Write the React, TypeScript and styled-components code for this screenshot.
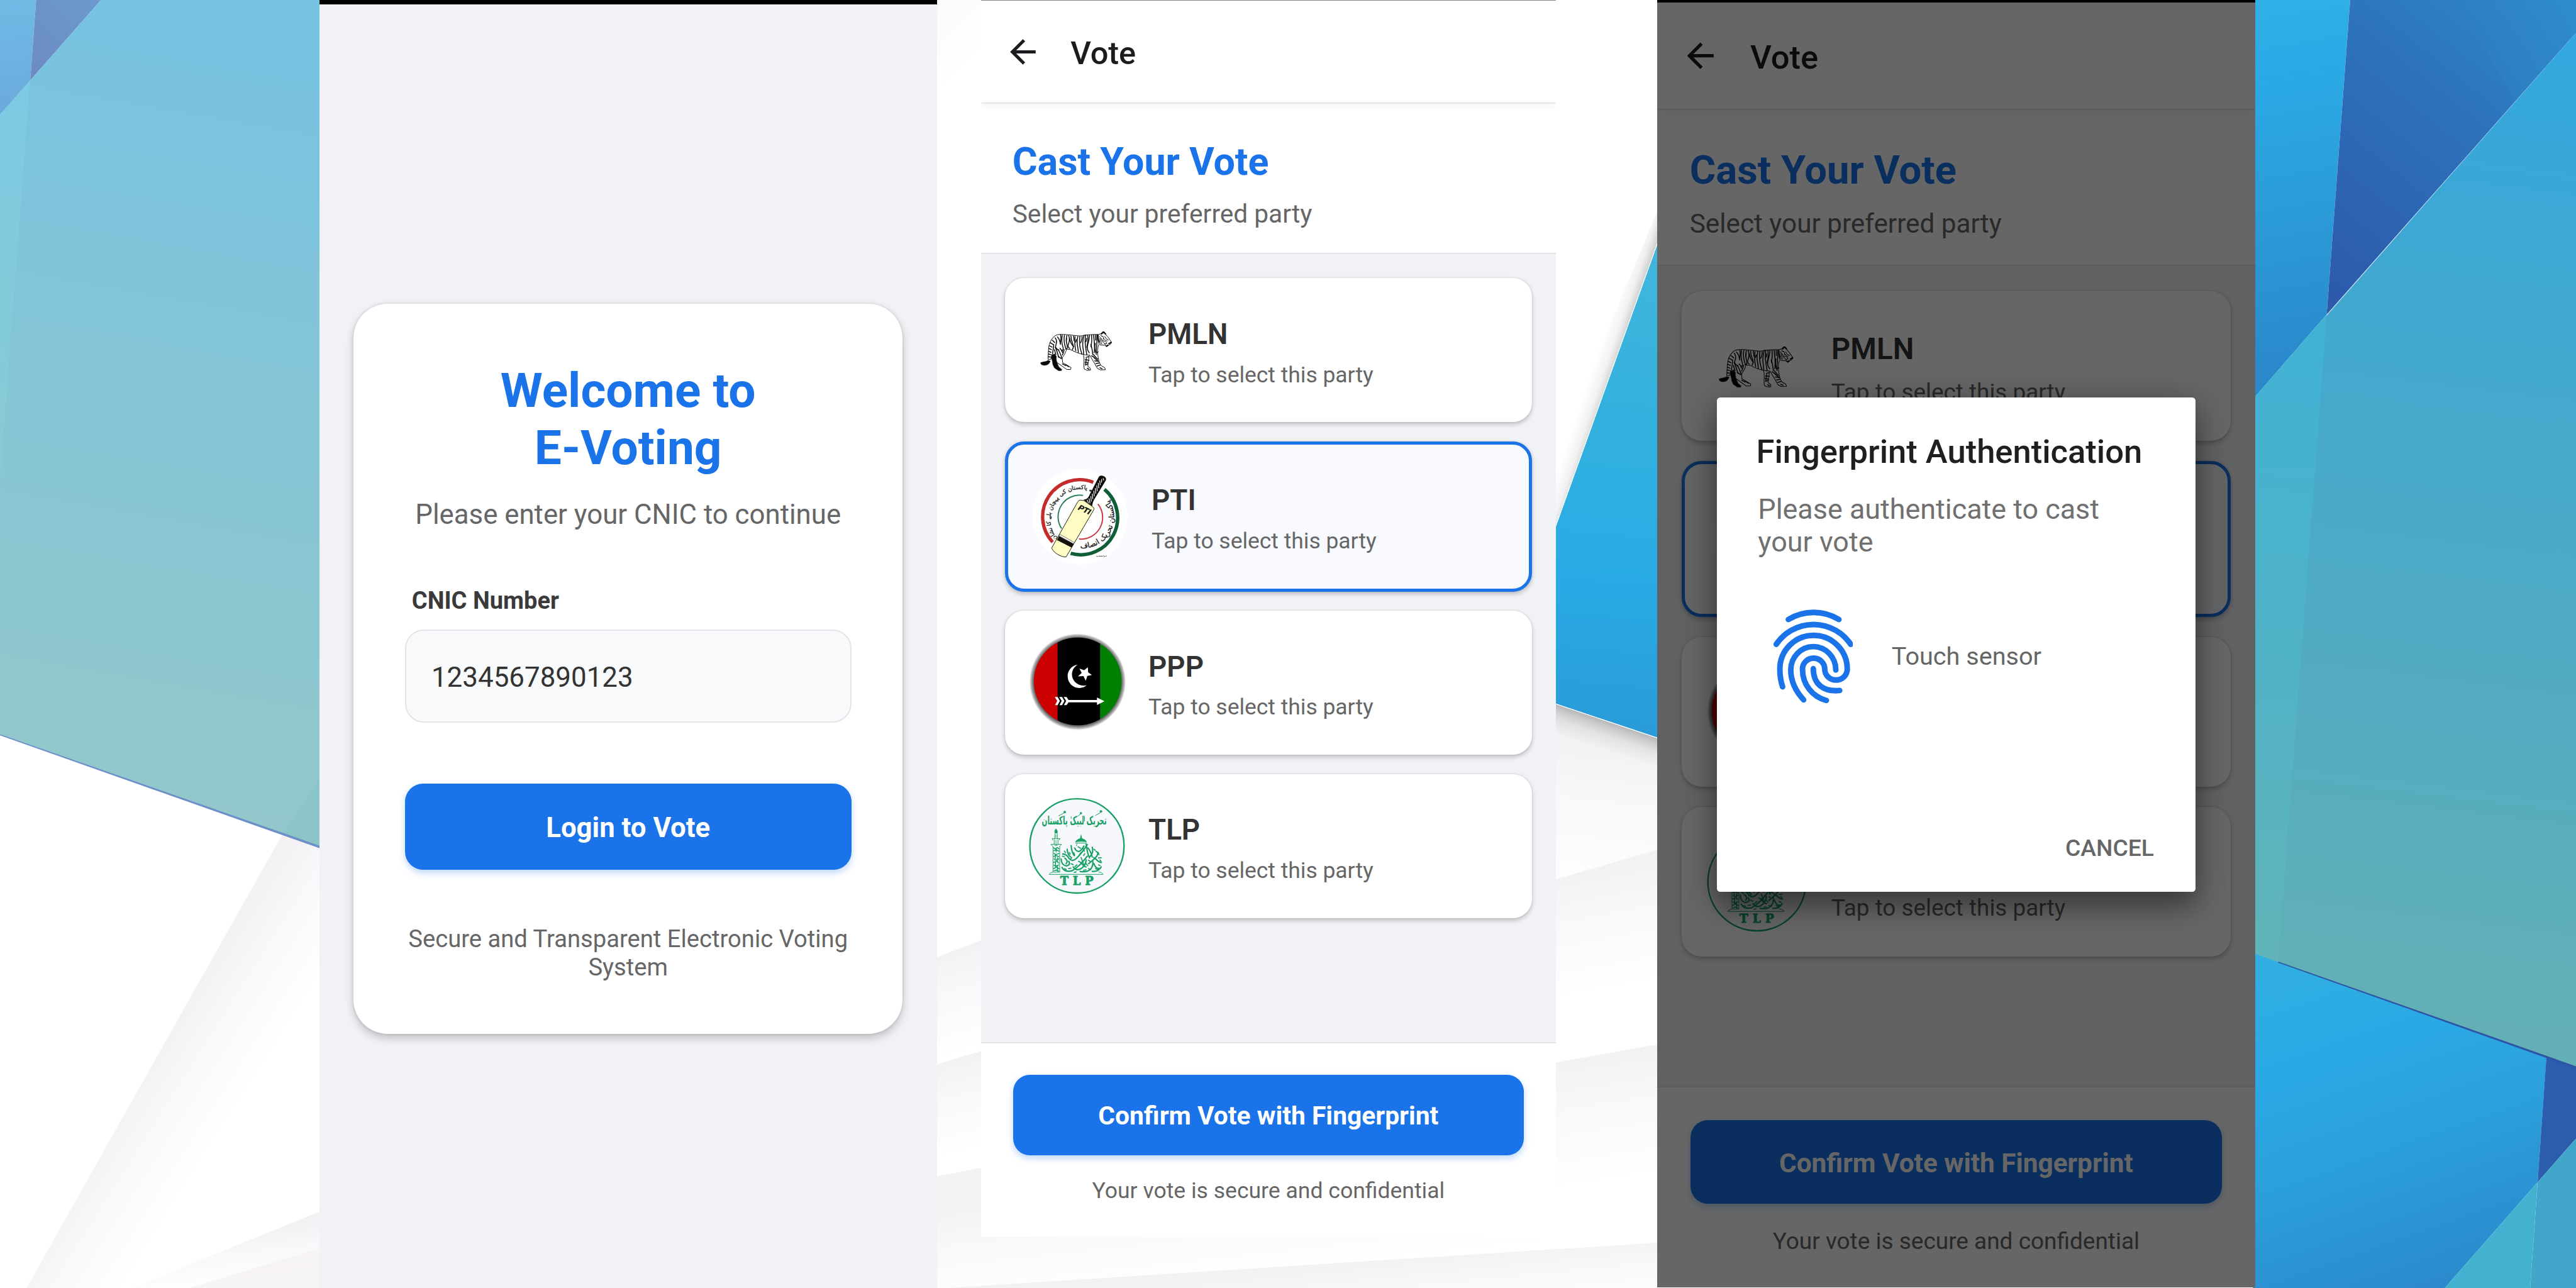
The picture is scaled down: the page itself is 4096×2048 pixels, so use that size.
import React from "react";
import styled, { createGlobalStyle, css } from "styled-components";

/* Every phone defines --dp (one density-independent pixel); its parts are sized in it. */
const dp = (n: number) => `calc(var(--dp) * ${n})`;

const blue = "#1a73e8";
const ink = "#333333";
const muted = "#666666";
const canvas = "#f0f2f5";
const hairline = "#e1e4e8";

const GlobalStyle = createGlobalStyle`
  html, body { margin: 0; padding: 0; background: #ffffff; }
  *, *::before, *::after { box-sizing: border-box; }
  h1, h2, p { margin: 0; }
  button, input { font: inherit; margin: 0; outline: none; }
`;

const Stage = styled.main`
  position: relative;
  width: 4096px;
  height: 2048px;
  overflow: hidden;
  display: grid;
  grid-template-columns: 982px 914px 951px;
  column-gap: 0;
  padding-left: 508px;
  font-family: Roboto, "Liberation Sans", sans-serif;
`;

const Backdrop = styled.svg`
  position: absolute;
  inset: 0;
  width: 100%;
  height: 100%;
`;

const Phone = styled.section<{ $dp: number; $height: number; $shift?: number; $bg?: string }>`
  --dp: ${(p) => p.$dp}px;
  position: relative;
  width: ${dp(360)};
  height: ${(p) => p.$height}px;
  margin-left: ${(p) => p.$shift ?? 0}px;
  background: ${(p) => p.$bg ?? "#ffffff"};
  display: flex;
  flex-direction: column;
  overflow: hidden;
`;

const StatusEdge = styled.div<{ $h: number; $color: string }>`
  flex: none;
  height: ${(p) => p.$h}px;
  background: ${(p) => p.$color};
`;

/* ---------- login ---------- */

const LoginCard = styled.div`
  margin: ${dp(174.5)} ${dp(20)} 0 ${dp(19.8)};
  width: ${dp(320.2)};
  height: ${dp(425.6)};
  padding: ${dp(34.2)} ${dp(30)} 0;
  border-radius: ${dp(20)};
  background: #ffffff;
  box-shadow: 0 ${dp(2.2)} ${dp(5)} rgba(0, 0, 0, 0.2), 0 0 ${dp(2)} rgba(0, 0, 0, 0.12);
  display: flex;
  flex-direction: column;
`;

const LoginTitle = styled.h1`
  color: ${blue};
  font-size: ${dp(28.1)};
  line-height: ${dp(33.2)};
  font-weight: 700;
  text-align: center;
`;

const LoginLead = styled.p`
  margin-top: ${dp(13)};
  color: ${muted};
  font-size: ${dp(16.05)};
  line-height: ${dp(19)};
  text-align: center;
  white-space: nowrap;
`;

const FieldLabel = styled.label`
  margin: ${dp(32.5)} 0 ${dp(8.5)} ${dp(4)};
  color: #3a3a3a;
  font-size: ${dp(13.95)};
  line-height: ${dp(16.4)};
  font-weight: 700;
`;

const Field = styled.input`
  height: ${dp(54.3)};
  padding: ${dp(0.9)} ${dp(14.7)} 0;
  border: ${dp(0.9)} solid #e1e4e8;
  border-radius: ${dp(11)};
  background: #f8f9fb;
  color: ${ink};
  font-size: ${dp(16.1)};
`;

const PrimaryButton = styled.button<{ $top?: number }>`
  flex: none;
  height: ${dp(50.2)};
  margin-top: ${(p) => dp(p.$top ?? 0)};
  padding: ${dp(1.1)} 0 0;
  border: 0;
  border-radius: ${dp(10.5)};
  background: ${blue};
  box-shadow: 0 ${dp(1.8)} ${dp(4)} rgba(26, 115, 232, 0.28);
  color: #ffffff;
  font-size: ${dp(16.05)};
  font-weight: 700;
`;

const LoginFoot = styled.p`
  margin: ${dp(32.1)} ${dp(-4)} 0;
  color: ${muted};
  font-size: ${dp(14)};
  line-height: ${dp(16.7)};
  text-align: center;
`;

/* ---------- vote ---------- */

const AppBar = styled.header`
  position: relative;
  flex: none;
  z-index: 1;
  height: ${dp(64)};
  padding-left: ${dp(14.1)};
  display: flex;
  align-items: center;
  gap: ${dp(17.9)};
  background: #ffffff;
  box-shadow: 0 ${dp(0.8)} ${dp(0.6)} rgba(0, 0, 0, 0.1), 0 ${dp(2)} ${dp(5)} rgba(0, 0, 0, 0.06);
`;

const BackIcon = styled.svg`
  width: ${dp(24)};
  height: ${dp(24)};
  fill: #1c1b1f;
`;

const AppBarTitle = styled.h2`
  padding-top: ${dp(2.3)};
  color: #1c1c1e;
  font-size: ${dp(19.9)};
  line-height: ${dp(24)};
  font-weight: 500;
`;

const Intro = styled.div`
  flex: none;
  height: ${dp(94.8)};
  padding: ${dp(23.2)} ${dp(20)} 0 ${dp(19.6)};
  border-bottom: ${dp(0.8)} solid ${hairline};
  display: flex;
  flex-direction: column;
  gap: ${dp(8.7)};
  background: #ffffff;
`;

const IntroTitle = styled.h1`
  color: ${blue};
  font-size: ${dp(24)};
  line-height: ${dp(28)};
  font-weight: 700;
`;

const IntroText = styled.p`
  color: ${muted};
  font-size: ${dp(16)};
  line-height: ${dp(19)};
`;

const PartyList = styled.div`
  flex: none;
  height: ${dp(493.3)};
  padding: ${dp(15)} ${dp(14.8)};
  display: flex;
  flex-direction: column;
  gap: ${dp(12)};
  background: ${canvas};
`;

const PartyCard = styled.article<{ $selected?: boolean }>`
  flex: none;
  padding: ${dp(15.1)} ${dp(15)};
  border-radius: ${dp(12)};
  display: flex;
  gap: ${dp(15)};
  background: #ffffff;
  box-shadow: 0 ${dp(1.4)} ${dp(3)} rgba(0, 0, 0, 0.2), 0 0 ${dp(1.4)} rgba(0, 0, 0, 0.1);
  ${(p) =>
    p.$selected &&
    css`
      border: ${dp(2)} solid ${blue};
      background: #f8faff;
    `}
`;

const Logo = styled.svg`
  flex: none;
  width: ${dp(60)};
  height: ${dp(60)};
  overflow: visible;
`;

const PartyText = styled.div`
  padding-top: ${dp(9.5)};
  display: flex;
  flex-direction: column;
  gap: ${dp(6.9)};
`;

const PartyName = styled.h2`
  color: ${ink};
  font-size: ${dp(18)};
  line-height: ${dp(21)};
  font-weight: 600;
`;

const PartyHint = styled.p`
  color: ${muted};
  font-size: ${dp(13.95)};
  line-height: ${dp(16.4)};
`;

const ConfirmBar = styled.footer`
  flex: 1;
  padding: ${dp(20)} ${dp(20)} 0 ${dp(19.9)};
  border-top: ${dp(0.9)} solid ${hairline};
  display: flex;
  flex-direction: column;
  background: #ffffff;
`;

const ConfirmNote = styled.p`
  margin-top: ${dp(14.3)};
  color: ${muted};
  font-size: ${dp(14)};
  line-height: ${dp(16.4)};
  text-align: center;
`;

/* ---------- fingerprint dialog ---------- */

const Scrim = styled.div`
  position: absolute;
  inset: 0;
  z-index: 2;
  display: flex;
  align-items: center;
  justify-content: center;
  background: rgba(0, 0, 0, 0.6);
`;

const Dialog = styled.div`
  width: ${dp(288)};
  height: ${dp(297.4)};
  margin-top: ${dp(1)};
  padding: ${dp(20.8)} ${dp(25)} ${dp(18)} ${dp(24.7)};
  border-radius: ${dp(2)};
  background: #ffffff;
  box-shadow: 0 ${dp(9)} ${dp(16)} rgba(0, 0, 0, 0.34), 0 ${dp(2)} ${dp(20)} rgba(0, 0, 0, 0.2);
  display: flex;
  flex-direction: column;
`;

const DialogTitle = styled.h2`
  margin-left: ${dp(-1.1)};
  color: #1f1f1f;
  font-size: ${dp(19.9)};
  line-height: ${dp(24)};
  font-weight: 500;
  white-space: nowrap;
`;

const DialogText = styled.p`
  width: ${dp(220)};
  margin-top: ${dp(12.6)};
  color: #707070;
  font-size: ${dp(17)};
  line-height: ${dp(20)};
`;

const SensorRow = styled.div`
  margin: ${dp(30.1)} 0 0 ${dp(9.3)};
  display: flex;
  align-items: center;
  gap: ${dp(23.2)};
  color: ${muted};
  font-size: ${dp(15)};
  line-height: ${dp(18)};
`;

const FingerIcon = styled.svg`
  width: ${dp(47.9)};
  height: ${dp(56.5)};
  fill: none;
  stroke: ${blue};
  stroke-width: 45;
  stroke-linecap: round;
`;

const CancelButton = styled.button`
  align-self: flex-end;
  margin-top: auto;
  padding: 0;
  border: 0;
  background: transparent;
  color: ${muted};
  font-size: ${dp(14.1)};
  line-height: ${dp(16.4)};
  font-weight: 500;
`;

/* ---------- drawings ---------- */

const tigerStripes = [
  "M452 556Q470 580 458 610T482 654", "M470 548Q490 570 494 608", "M495 532Q502 560 492 600", "M508 534Q500 590 512 622T504 662",
  "M526 534Q518 580 532 624L538 646", "M546 536Q536 570 546 606T538 646", "M560 536Q572 570 560 600T568 640", "M578 540Q580 574 592 600T590 650",
  "M568 560Q574 600 600 626", "M600 540L604 580", "M612 545Q604 600 618 660", "M634 544Q622 590 634 634L638 672",
  "M650 545Q644 610 656 650T664 684", "M668 545Q670 566 656 596", "M684 534Q668 590 676 640T676 688", "M696 532Q688 590 700 652L706 690",
  "M712 534Q720 574 706 632", "M728 532Q726 570 714 608T726 676", "M744 532Q750 580 740 628", "M738 610Q750 640 754 690",
  "M760 532Q768 590 768 632T764 676", "M776 532L778 574", "M788 532Q790 580 784 636T796 668", "M774 600Q764 650 784 690",
  "M428 575l20 18", "M412 595l24 14", "M406 620l20 10", "M402 642l20 8", "M400 664l18 8", "M398 686l18 4", "M396 708l18 2",
  "M440 610Q438 640 430 684", "M452 630Q466 660 480 712", "M474 650Q490 670 506 720", "M490 640Q502 650 512 674", "M524 650Q520 670 510 694",
  "M446 650Q450 670 458 690", "M700 712l24-6", "M694 732l30 4", "M692 752l24 4", "M695 774l20-8", "M702 722l-6 50", "M745 700Q760 706 776 724",
  "M760 690Q770 704 794 728", "M770 740l28 4", "M780 762l26-4", "M790 782l24-8", "M765 715l34 30", "M500 722l-24-18",
  "M510 765l26 14", "M536 770l24 18", "M710 800l14 8", "M812 796l18 8", "M544 560l-4 20", "M622 570l-6 20", "M704 560l-4 26",
];

const Tiger = () => (
  <Logo viewBox="240 271 771 771" fill="none" stroke="#0b0b0b" strokeLinecap="round" strokeLinejoin="round">
    <path
      strokeWidth="5"
      d="M440 548C455 530 480 526 520 528C580 531 620 540 660 540C700 532 740 528 800 528L822 522C826 506 842 502 852 514L860 532C876 546 886 562 895 576L906 592L897 606L885 612L868 626L850 615L812 612C802 606 797 590 796 560M801 612C792 640 790 665 796 700C800 740 812 770 826 782L850 795L856 812L815 813L790 800C775 770 752 735 730 695C690 694 640 685 575 650L545 645C532 682 520 702 508 715L512 755L580 795L575 810L545 810L468 755M440 548C412 575 400 610 398 650L394 728L418 728L424 690M680 695C690 730 678 770 685 805Q705 823 735 815L735 800L715 785C712 755 722 730 725 700"
    />
    <g strokeWidth="7.5">
      {tigerStripes.map((d) => (
        <path key={d} d={d} />
      ))}
    </g>
    <path strokeWidth="10" d="M824 524L842 508L856 524M884 602L902 592M864 622L876 614M796 534Q796 560 804 586" />
    <path strokeWidth="5" d="M808 545Q826 560 812 580T826 602M826 540Q850 546 838 568M850 545Q858 566 880 574M836 578Q862 582 868 600L850 604M822 560Q828 584 858 612M840 560Q852 576 870 582M818 536l16 10" />
    <path strokeWidth="16" stroke="#777" opacity=".7" d="M814 562l8 30" />
    <path
      fill="#0b0b0b"
      strokeWidth="2"
      d="M335 756C350 746 378 750 394 736L412 742C407 762 390 777 365 777C345 777 333 768 335 756ZM424 694L448 684L462 706C456 732 470 762 482 790L506 810L500 820L478 820L445 797L432 770C432 745 418 722 424 694Z"
    />
  </Logo>
);

const Bat = () => (
  <Logo viewBox="267 172 771 771" fill="none">
    <defs>
      <path id="pti-upper" d="M464 728A244 244 0 0 1 752 356" />
      <path id="pti-lower" d="M600 800A250 250 0 0 0 868 400" />
    </defs>
    <circle cx="652" cy="558" r="384" fill="#ffffff" />
    <path stroke="#c62b2b" strokeWidth="27" d="M433 764A298 298 0 0 1 760 283" />
    <path stroke="#0f5f36" strokeWidth="28" d="M850 340A298 298 0 0 1 578 855" />
    <path stroke="#2d8259" strokeWidth="10" d="M505 655A174 174 0 0 1 678 388" />
    <path stroke="#c93a3f" strokeWidth="10" d="M797 457A174 174 0 0 1 645 739" />
    <g fill="#151515" stroke="#151515" strokeWidth="1.4" fontFamily="'DejaVu Sans', sans-serif" textAnchor="middle">
      <text fontSize="47">
        <textPath href="#pti-upper" startOffset="51%">نئے پاکستان کی پہچان بلے کا نشان</textPath>
      </text>
      <text fontSize="60">
        <textPath href="#pti-lower" startOffset="52%">پاکستان تحریک انصاف</textPath>
      </text>
    </g>
    <path fill="#0f0c0a" d="M680 424C716 420 722 400 732 380L806 236Q822 222 846 234Q866 246 862 266L768 420C758 440 752 452 752 474Z" />
    <path
      stroke="#ffffff"
      strokeWidth="6"
      d="M828 256l-2 30M812 268l4 38M800 288l4 42M788 308l4 46M776 330l4 44M764 352l4 44M752 374l4 44M740 394l4 44M726 412l8 40M710 424l12 24M840 250l4 18"
    />
    <path
      fill="#fffdc4"
      stroke="#1c1a12"
      strokeWidth="5"
      strokeLinejoin="round"
      d="M652 426Q640 428 632 445L425 812C440 850 500 886 541 884L766 500Q770 488 752 478L684 430Z"
    />
    <path fill="#ffffff" stroke="#1c1a12" strokeWidth="3" d="M492 702L608 768L602 780L485 714Z" />
    <path fill="#15110c" d="M484 716L602 778L586 808L468 748Z" />
    <text
      fill="#0c0c0c"
      stroke="#0c0c0c"
      strokeWidth="2"
      fontFamily="'Liberation Sans', sans-serif"
      fontWeight="700"
      fontStyle="italic"
      fontSize="62"
      transform="translate(634 500) rotate(25)"
      textLength="102"
      lengthAdjust="spacingAndGlyphs"
    >
      PTI
    </text>
    <path stroke="#444" strokeWidth="5" d="M785 879h12M802 877h34M842 872l6 12M852 878h6M862 876h6" />
  </Logo>
);

const Flag = () => (
  <Logo viewBox="180 130 771 771">
    <defs>
      <clipPath id="ppp-disc">
        <circle cx="573" cy="507" r="353" />
      </clipPath>
      <radialGradient id="ppp-rim" gradientUnits="userSpaceOnUse" cx="572" cy="510" r="392">
        <stop offset=".89" stopColor="#555" />
        <stop offset=".93" stopColor="#8d8d8d" />
        <stop offset=".965" stopColor="#b5b5b5" stopOpacity=".8" />
        <stop offset="1" stopColor="#ffffff" stopOpacity="0" />
      </radialGradient>
    </defs>
    <circle cx="572" cy="510" r="392" fill="url(#ppp-rim)" />
    <g clipPath="url(#ppp-disc)">
      <rect x="180" y="130" width="232" height="771" fill="#cc0000" />
      <rect x="411" y="130" width="344" height="771" fill="#000000" />
      <rect x="754" y="130" width="200" height="771" fill="#008000" />
    </g>
    <g fill="#ffffff">
      <path d="M572 373C520 380 490 425 492 468C494 525 540 562 590 560C615 558 635 550 645 538C600 548 562 530 540 497C515 455 525 400 572 373Z" />
      <path d="M654 393L657 434L687 455L650 463L638 502L619 464L575 467L605 439L587 403L625 417Z" />
      <path d="M388 632h23l19 32-19 34h-21l18-34ZM424 632h23l19 32-19 34h-21l18-34ZM460 632h23l16 24h229v-20l60 30-60 31v-22H499l-16 23h-21l18-34Z" />
    </g>
  </Logo>
);

const Mosque = () => (
  <Logo viewBox="180 122 771 771" fill="none" stroke="#18a065" strokeLinecap="round" strokeLinejoin="round">
    <circle cx="567" cy="507" r="379" fill="#f7f8fb" strokeWidth="12" />
    <g fill="#18a065" stroke="none">
      <text
        transform="translate(545 334) scale(.62 1.12)"
        fontFamily="'DejaVu Sans', sans-serif"
        fontSize="84"
        fontWeight="700"
        textAnchor="middle"
      >
        تحریک لبیک پاکستان
      </text>
      <circle cx="468" cy="234" r="10" />
      <circle cx="599" cy="243" r="9" />
      <circle cx="760" cy="229" r="10" />
      <path d="M552 478Q560 455 592 446L600 410L608 446Q640 455 646 478Q600 466 552 478ZM398 366L408 382Q416 398 408 406H390Q382 396 388 382Z" />
      <path d="M384 506Q398 490 414 506Z" />
      <text
        x="583"
        y="823"
        stroke="#18a065"
        strokeWidth="4"
        fontFamily="'DejaVu Serif', 'Liberation Serif', serif"
        fontSize="91"
        fontWeight="700"
        textAnchor="middle"
        letterSpacing="34"
      >
        TLP
      </text>
    </g>
    <g strokeWidth="5">
      <path d="M420 264L468 240M562 276L599 248M716 262L760 236M520 270v16M628 268v40" />
      <path d="M390 408L388 446M408 408L410 446M370 448H430M384 456V492M414 456V492M358 494H442M368 450l6 10M430 450l-6 10M360 498l12 12M440 498l-12 12" />
      <path d="M374 512V716M428 512V716M344 736H776M344 734Q356 716 376 718H428M742 718Q766 716 776 734M556 484H644M566 492L562 506M636 492L642 506" />
      <path d="M398 420v20M398 462v26" strokeWidth="7" opacity=".6" />
    </g>
    <g strokeWidth="8">
      <path d="M380 522l14 10 14-12 14 10M380 546l20-8 22 12M382 566l14 12 26-10M380 592l18-8 24 10M384 612l12 10 26-12M380 640l22-10 18 14M382 662l16 8 22-10M380 690l20-12 22 12M382 708l18-6 20 8M400 524v30M392 580v28M410 600v34M394 640v34M410 670v40" />
    </g>
    <g strokeWidth="11">
      <path d="M452 572Q480 570 505 610Q530 640 565 605Q610 560 650 496M488 534Q492 580 516 596M520 504Q524 560 546 586M548 524Q560 552 584 552Q608 540 622 508M642 494Q648 560 668 604M656 524Q676 548 690 596M690 518Q704 560 672 592M722 552Q746 560 726 590Q700 620 660 650" />
      <path d="M440 612Q440 660 480 668Q520 660 500 630M446 680Q470 724 530 706Q590 670 650 590M536 676Q560 712 600 690Q640 660 640 620M592 712Q650 724 680 690Q700 660 694 630M690 712Q740 716 762 676M716 610Q744 640 764 640M470 606Q500 628 480 650M704 650Q716 690 744 688M600 640Q616 670 640 676" />
    </g>
    <g strokeWidth="9">
      <path d="M600 600l22 60M580 630l14 8M640 650l14 16M466 690l14 6M716 690l22 8M740 604l22-2M466 548l8 14M506 560l6 14M576 514l20 12M704 534l10 8M660 690l18 8M524 600l-8 14M620 530l6 20M740 660l14 6M560 716l-14 4M480 706l16 4M450 590l16 4M540 560l8 18M600 560l-14 18M630 570l-10 14M676 560l8 10M700 600l14 12M660 622l16 12M566 660l-16 14M520 650l16 8M500 690l18-4M620 704l20-4M752 620l8 10M738 560l6 18" />
    </g>
  </Logo>
);

const Fingerprint = () => (
  <FingerIcon viewBox="85 105 640 755">
    <path d="M204 186A390 390 0 0 1 611 186" />
    <path d="M107 386A361 361 0 0 1 706 386" />
    <path d="M158 727C142 680 136 635 136 585A271 271 0 0 1 678 585A90.5 88 0 0 1 497 585A89.5 88 0 0 0 318 585C318 710 400 810 510 837" />
    <path d="M586 592A181 188 0 0 0 224 592C224 680 265 765 327 832" />
    <path d="M405 582C405 710 490 770 617 757" />
  </FingerIcon>
);

type Stop = [number, string, number?];
type GradientProps = { id: string; from: [number, number]; to: [number, number]; stops: Stop[] };

const Gradient = ({ id, from, to, stops }: GradientProps) => (
  <linearGradient id={id} gradientUnits="userSpaceOnUse" x1={from[0]} y1={from[1]} x2={to[0]} y2={to[1]}>
    {stops.map(([offset, color, opacity = 1]) => (
      <stop key={offset} offset={offset} stopColor={color} stopOpacity={opacity} />
    ))}
  </linearGradient>
);

const fold: Stop[] = [[0, "#f4f1f4"], [0.45, "#faf8fa"], [1, "#ffffff"]];

const PaperFacets = () => (
  <Backdrop viewBox="0 0 6912 3456" preserveAspectRatio="none" aria-hidden="true">
    <defs>
      <Gradient id="l-sky" from={[0, 0]} to={[40, 300]} stops={[[0, "#6fbbe6"], [1, "#6baadb"]]} />
      <Gradient id="l-violet" from={[80, 200]} to={[270, 0]} stops={[[0, "#6d8bc4"], [1, "#6b9acd"]]} />
      <Gradient id="l-teal" from={[760, 0]} to={[380, 2150]} stops={[[0, "#75c2e3"], [0.33, "#80c4da"], [0.7, "#8ac6d1"], [1, "#92c8cb"]]} />
      <Gradient id="l-teal-edge" from={[60, 216]} to={[0, 1289]} stops={[[0, "#7ccae3"], [1, "#88cbd2"]]} />
      <Gradient id="l-fold-a" from={[620, 2500]} to={[840, 2640]} stops={fold} />
      <Gradient id="l-fold-b" from={[700, 3300]} to={[716, 3440]} stops={fold} />
      <Gradient id="m-a" from={[2560, 2545]} to={[2640, 2800]} stops={fold} />
      <Gradient id="m-b" from={[2560, 2838]} to={[2620, 3080]} stops={fold} />
      <Gradient id="m-c" from={[3300, 3150]} to={[3330, 3420]} stops={fold} />
      <Gradient id="m-d" from={[3500, 3400]} to={[3520, 3600]} stops={fold} />
      <Gradient id="m-top" from={[2514, 0]} to={[2640, 120]} stops={[[0, "#fafafb"], [1, "#ffffff"]]} />
      <Gradient id="c-a" from={[4290, 1950]} to={[4250, 2330]} stops={[[0, "#f1eff2"], [0.5, "#f8f7f9"], [1, "#fdfdfd"]]} />
      <Gradient id="c-b" from={[4300, 2325]} to={[4360, 2640]} stops={fold} />
      <Gradient id="c-c" from={[4300, 2826]} to={[4350, 3160]} stops={fold} />
      <Gradient id="c-blue" from={[4447, 653]} to={[4330, 1960]} stops={[[0, "#42b6dc"], [0.35, "#33b1de"], [0.68, "#29abe5"], [1, "#299cd9"]]} />
      <Gradient id="c-side" from={[4250, 1052]} to={[4315, 1074]} stops={[[0, "#9a9a9a", 0], [0.5, "#8c8c8c", 0.12], [1, "#777777", 0.5]]} />
      <Gradient id="c-under" from={[4320, 1940]} to={[4296, 2012]} stops={[[0, "#777777", 0.45], [0.5, "#999999", 0.16], [1, "#999999", 0]]} />
      <Gradient id="r-sky" from={[6080, 0]} to={[6250, 960]} stops={[[0, "#30b0e6"], [0.18, "#2aabe6"], [0.6, "#2b9bd8"], [1, "#2b89cb"]]} />
      <Gradient id="r-violet" from={[6260, 800]} to={[6900, 0]} stops={[[0, "#2d5aab"], [0.55, "#2d70ba"], [1, "#2e8bca"]]} />
      <Gradient id="r-violet-b" from={[6590, 0]} to={[6912, 130]} stops={[[0, "#2f80c2", 0.5], [1, "#2f90cf"]]} />
      <Gradient id="r-teal" from={[6800, 120]} to={[6480, 2720]} stops={[[0, "#33a7de"], [0.3, "#42a8cf"], [0.65, "#52abc2"], [1, "#62b0b5"]]} />
      <Gradient id="r-teal-edge" from={[6150, 950]} to={[6070, 2570]} stops={[[0, "#42b2d4"], [0.5, "#50b2c6"], [1, "#61b4b8"]]} />
      <Gradient id="r-low" from={[6250, 2560]} to={[6560, 3440]} stops={[[0, "#30aee2"], [0.25, "#2aaae5"], [0.6, "#2b9fdb"], [1, "#2b8acc"]]} />
    </defs>

    <path fill="url(#l-fold-a)" d="M757 2240L71 3456H354L857 3251V2200Z" />
    <path fill="url(#l-fold-b)" d="M857 3251L354 3456H857Z" />
    <path fill="#f3eff2" opacity=".7" d="M857 3350L507 3456H857Z" />
    <path fill="url(#l-sky)" d="M0 0H97L81 216L0 308Z" />
    <path fill="url(#l-violet)" d="M97 0H271L81 216Z" />
    <path fill="url(#l-teal)" d="M0 308L271 0H860V2275L0 1972Z" />
    <path fill="url(#l-teal-edge)" d="M0 308L81 216L0 1289Z" />
    <path fill="#7fbfc2" opacity=".35" d="M857 2089L757 2238L857 2273Z" />
    <path fill="#6c8fc9" d="M0 1970L860 2270V2277L0 1973Z" />

    <path fill="url(#m-top)" d="M2510 0H2640V700L2510 1100Z" />
    <path fill="url(#m-a)" d="M2510 2570L2640 2520V2820L2510 2857Z" />
    <path fill="url(#m-b)" d="M2510 2857L2640 2818V3132L2510 3157Z" />
    <path fill="url(#m-c)" d="M2510 3157L2640 3132L4450 2800V3334L2540 3456H2510Z" />
    <path fill="url(#m-d)" d="M2540 3456L4450 3334V3456Z" />
    <path fill="url(#c-a)" d="M4170 1884L4450 1980V2279L4170 2361Z" />
    <path fill="url(#c-b)" d="M4170 2361L4450 2279V2802L4170 2852Z" />
    <path fill="url(#c-c)" d="M4170 2852L4450 2802V3334L4170 3352Z" />
    <path fill="url(#c-side)" d="M4450 560V660L4170 1420V1230Z" />
    <path fill="url(#c-under)" d="M4170 1888L4450 1982V2080L4170 1960Z" />
    <path fill="url(#c-blue)" stroke="#ffffff" strokeWidth="2" d="M4450 645L4170 1424V1887L4450 1981Z" />

    <path fill="url(#r-sky)" d="M6045 0H6306L6243 844L6045 1071Z" />
    <path fill="url(#r-violet)" d="M6306 0H6912V88L6243 844Z" />
    <path fill="url(#r-violet-b)" opacity=".35" d="M6590 0H6912V88L6750 271Z" />
    <path fill="url(#r-low)" d="M6045 2555L6833 2835L6809 3172L6560 3456H6045Z" />
    <path fill="#2c5cac" d="M6833 2830L6912 2860V3055L6809 3172Z" />
    <path fill="#42a6cb" d="M6809 3172L6912 3055V3456H6789Z" />
    <path fill="#43b2d1" d="M6560 3456L6809 3172L6789 3456Z" />
    <path fill="url(#r-teal)" d="M6045 1071L6912 88V2863L6045 2557Z" />
    <path fill="url(#r-teal-edge)" d="M6045 1071L6243 844L6113 2581L6045 2557Z" />
    <path fill="#2e55a5" d="M6113 2580L6912 2861V2867L6113 2583Z" />
  </Backdrop>
);

/* ---------- screens ---------- */

type Party = { name: string; Emblem: () => React.JSX.Element };

const parties: Party[] = [
  { name: "PMLN", Emblem: Tiger },
  { name: "PTI", Emblem: Bat },
  { name: "PPP", Emblem: Flag },
  { name: "TLP", Emblem: Mosque },
];

const LoginScreen = () => (
  <Phone $dp={982 / 360} $height={2048} $bg={canvas}>
    <StatusEdge $h={7} $color="#000000" />
    <LoginCard>
      <LoginTitle>
        Welcome to
        <br />
        E-Voting
      </LoginTitle>
      <LoginLead>Please enter your CNIC to continue</LoginLead>
      <FieldLabel htmlFor="cnic">CNIC Number</FieldLabel>
      <Field id="cnic" defaultValue="1234567890123" />
      <PrimaryButton $top={35.6}>Login to Vote</PrimaryButton>
      <LoginFoot>
        Secure and Transparent Electronic Voting
        <br />
        System
      </LoginFoot>
    </LoginCard>
  </Phone>
);

type VoteScreenProps = {
  width: number;
  height: number;
  shift: number;
  edge: { h: number; color: string };
  children?: React.ReactNode;
};

const VoteScreen = ({ width, height, shift, edge, children }: VoteScreenProps) => (
  <Phone $dp={width / 360} $height={height} $shift={shift}>
    <StatusEdge $h={edge.h} $color={edge.color} />
    <AppBar>
      <BackIcon viewBox="0 0 24 24">
        <path d="M20 11H7.83l5.59-5.59L12 4l-8 8 8 8 1.41-1.41L7.83 13H20v-2z" />
      </BackIcon>
      <AppBarTitle>Vote</AppBarTitle>
    </AppBar>
    <Intro>
      <IntroTitle>Cast Your Vote</IntroTitle>
      <IntroText>Select your preferred party</IntroText>
    </Intro>
    <PartyList>
      {parties.map(({ name, Emblem }) => (
        <PartyCard key={name} $selected={name === "PTI"}>
          <Emblem />
          <PartyText>
            <PartyName>{name}</PartyName>
            <PartyHint>Tap to select this party</PartyHint>
          </PartyText>
        </PartyCard>
      ))}
    </PartyList>
    <ConfirmBar>
      <PrimaryButton>Confirm Vote with Fingerprint</PrimaryButton>
      <ConfirmNote>Your vote is secure and confidential</ConfirmNote>
    </ConfirmBar>
    {children}
  </Phone>
);

export default function App() {
  return (
    <>
      <GlobalStyle />
      <Stage>
        <PaperFacets />
        <LoginScreen />
        <VoteScreen width={914} height={1967} shift={70} edge={{ h: 1, color: "#8a8a8a" }} />
        <VoteScreen width={951} height={2047} shift={231} edge={{ h: 4, color: "#000000" }}>
          <Scrim>
            <Dialog role="dialog">
              <DialogTitle>Fingerprint Authentication</DialogTitle>
              <DialogText>Please authenticate to cast your vote</DialogText>
              <SensorRow>
                <Fingerprint />
                Touch sensor
              </SensorRow>
              <CancelButton>CANCEL</CancelButton>
            </Dialog>
          </Scrim>
        </VoteScreen>
      </Stage>
    </>
  );
}
